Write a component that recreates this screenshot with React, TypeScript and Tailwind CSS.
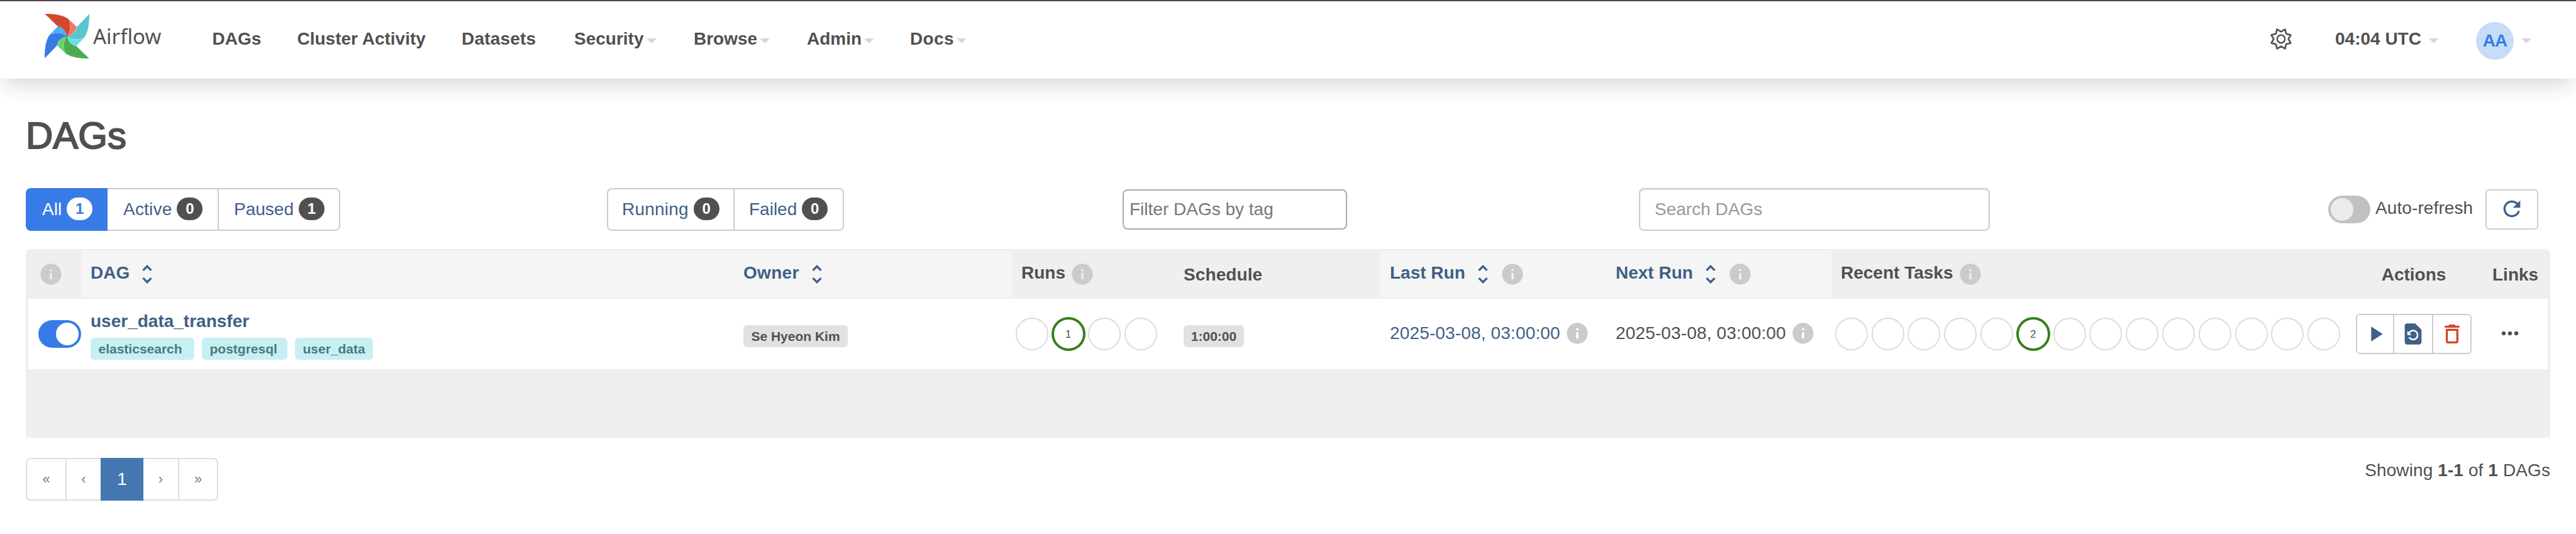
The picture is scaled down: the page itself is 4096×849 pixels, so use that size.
import React from "react";
import {
  MdDeleteOutline,
  MdInfo,
  MdMoreHoriz,
  MdPlayArrow,
  MdRefresh,
  MdRestorePage,
  MdUnfoldMore,
} from "react-icons/md";

const BLADES = [
  { rotate: 180, main: "#4eaa52", light: "#62d666" },
  { rotate: 270, main: "#377be6", light: "#50aefb" },
  { rotate: 90, main: "#5bc4d1", light: "#6adfea" },
  { rotate: 0, main: "#d2482f", light: "#f07c5f" },
];

function Pinwheel() {
  return (
    <svg viewBox="-106.5 -106.5 213 213" className="size-[71px]">
      {BLADES.map((b) => (
        <g key={b.rotate} transform={`rotate(${b.rotate})`}>
          <path
            fill={b.main}
            d="M-106-107C-60-106-18-102 8-81C19-50 16-20 0 0C-4-20-22-46-43-46Z"
          />
          <path fill={b.light} d="M8-81L43-48Q47-44 45-39C40-20 20-4 0 0C16-20 19-50 8-81Z" />
        </g>
      ))}
      <circle r="3.5" fill="#51504f" />
    </svg>
  );
}

function Gear() {
  const points = Array.from({ length: 16 }, (_, i) => {
    const angle = (i * Math.PI) / 8;
    const r = i % 2 ? 50 : 35;
    return `${(r * Math.cos(angle)).toFixed(1)},${(r * Math.sin(angle)).toFixed(1)}`;
  }).join(" ");
  return (
    <svg viewBox="-60 -60 120 120" className="size-10" fill="none" stroke="#51504f">
      <polygon points={points} strokeWidth="8" strokeLinejoin="round" />
      <circle r="18.5" strokeWidth="7.5" />
    </svg>
  );
}

function Caret({ className = "" }: { className?: string }) {
  return (
    <span
      className={`mt-[6px] block size-0 border-x-8 border-t-8 border-x-transparent border-t-[#dfd3e2] ${className}`}
    />
  );
}

function NavItem({ label, width, menu = false }: { label: string; width: string; menu?: boolean }) {
  return (
    <div className={`flex shrink-0 items-center ${width}`}>
      <span>{label}</span>
      {menu && <Caret className="ml-[4px]" />}
    </div>
  );
}

function Count({ n, active = false }: { n: number; active?: boolean }) {
  return (
    <span
      className={`mb-[2px] ml-[8px] flex h-[36px] w-[41px] items-center justify-center rounded-[20px] text-[24px] font-bold tracking-normal ${
        active ? "bg-white text-[#377be6]" : "bg-[#51504f] text-white"
      }`}
    >
      {n}
    </span>
  );
}

function Info({ className = "" }: { className?: string }) {
  return <MdInfo className={`size-10 shrink-0 text-[#cbcbcb] ${className}`} />;
}

function SortHeader({ label, className = "", info = false }: { label: string; className?: string; info?: boolean }) {
  return (
    <div className={`my-[2px] flex items-center bg-[#f5f5f5] text-[#3f5f87] ${className}`}>
      <span className="mb-[3px]">{label}</span>
      <MdUnfoldMore className="ml-[8px] size-10 shrink-0" />
      {info && <Info className="ml-[7px]" />}
    </div>
  );
}

function Circles({ total, at, value, className }: { total: number; at: number; value: number; className: string }) {
  return (
    <div className={`flex items-center ${className}`}>
      {Array.from({ length: total }, (_, i) => (
        <div key={i} className="flex w-[57.8px] shrink-0 items-center justify-center">
          {i === at ? (
            <div className="flex size-[54px] items-center justify-center rounded-full border-4 border-[#36801b] text-[16.5px]">
              {value}
            </div>
          ) : (
            <div className="size-[52px] rounded-full border-2 border-[#dddddd]" />
          )}
        </div>
      ))}
    </div>
  );
}

const COLS = "grid grid-cols-[88px_1037px_442px_258px_328px_359px_359px_816px_220px_107px]";
const ROW_COLS = "grid grid-cols-[84px_1037px_442px_258px_328px_359px_359px_816px_220px_103px]";

export default function App() {
  return (
    <div className="flex h-[849px] w-full flex-col overflow-hidden bg-white font-['Liberation_Sans',Arial,sans-serif] text-[28px] leading-none whitespace-nowrap text-[#51504f]">
      <header className="flex h-[125px] shrink-0 border-t-2 border-[#53424a] bg-white pb-[4px] pl-[71px] pr-[71px] font-bold shadow-[0_17px_28px_-6px_rgba(81,80,79,0.21)]">
        <div className="mb-[8px] flex w-[266.5px] shrink-0 items-center">
          <Pinwheel />
          <span className="ml-[6px] font-['Noto_Sans','Open_Sans',sans-serif] text-[33px] font-normal">
            Airflow
          </span>
        </div>
        <nav className="flex">
          <NavItem label="DAGs" width="w-[135px]" />
          <NavItem label="Cluster Activity" width="w-[261.5px]" />
          <NavItem label="Datasets" width="w-[179px] tracking-[0.2px]" />
          <NavItem label="Security" width="w-[190px]" menu />
          <NavItem label="Browse" width="w-[180px]" menu />
          <NavItem label="Admin" width="w-[164px]" menu />
          <NavItem label="Docs" width="w-[100px] tracking-[0.4px]" menu />
        </nav>
        <div className="ml-auto flex items-center">
          <Gear />
          <span className="ml-[66px] w-[137px]">04:04 UTC</span>
          <Caret className="ml-[12px]" />
          <div className="mt-[6px] ml-[59px] flex size-[60px] items-center justify-center rounded-full bg-[#c6dcf7] text-[#377be6]">
            <span className="tracking-[-1px]">AA</span>
          </div>
          <Caret className="ml-[12px]" />
        </div>
      </header>

      <main className="flex flex-col px-[41px]">
        <h1 className="mt-[61px] h-[60px] text-[60px] leading-[60px] font-normal [-webkit-text-stroke:2px_#51504f]">
          DAGs
        </h1>

        <div className="mt-[53px] grid h-[68px] grid-cols-[924px_820px_821px_1096px_1fr] items-center">
          <div className="flex h-full text-[#3f5f87]">
            <div className="flex w-[130px] items-center rounded-l-[8px] bg-[#377be6] pl-[26px] text-white">
              All
              <Count n={1} active />
            </div>
            <div className="flex w-[177px] items-center border-2 border-l-0 border-[#cccccc] pl-[25px] tracking-[0.2px]">
              Active
              <Count n={0} />
            </div>
            <div className="ml-[-2px] flex w-[195px] items-center rounded-r-[8px] border-2 border-[#cccccc] pl-[24px]">
              Paused
              <Count n={1} />
            </div>
          </div>
          <div className="flex h-full text-[#3f5f87]">
            <div className="flex w-[203px] items-center rounded-l-[8px] border-2 border-[#cccccc] pl-[22px] tracking-[0.2px]">
              Running
              <Count n={0} />
            </div>
            <div className="ml-[-2px] flex w-[176px] items-center rounded-r-[8px] border-2 border-[#cccccc] pl-[23px]">
              Failed
              <Count n={0} />
            </div>
          </div>
          <div className="flex h-[64px] w-[357px] items-center rounded-[8px] border-2 border-[#aaaaaa] pl-[9px] text-[#777777]">
            Filter DAGs by tag
          </div>
          <div className="flex h-full w-[558px] items-center rounded-[8px] border-2 border-[#cccccc] pl-[23px] text-[#999999] shadow-[inset_0_2px_2px_rgba(0,0,0,0.075)]">
            Search DAGs
          </div>
          <div className="flex items-center">
            <div className="flex h-[44px] w-[67px] items-center rounded-full bg-[#c2c1c0] pl-[4px]">
              <div className="size-[36px] rounded-full bg-[#ebebeb]" />
            </div>
            <span className="mb-[4px] ml-[8px] w-[175px] tracking-[0.1px]">Auto-refresh</span>
            <div className="flex h-[64px] w-[84px] items-center justify-center rounded-[6px] border-2 border-[#cccccc] text-[#3f5f87]">
              <MdRefresh className="mb-[2px] size-10" />
            </div>
          </div>
        </div>

        <div className="mt-[29px] h-[300px] w-[4014px] overflow-hidden rounded-t-[8px] bg-[#efefef]">
          <div className={`${COLS} h-[79px] font-bold`}>
            <div className="flex items-center pl-[20px]">
              <Info />
            </div>
            <SortHeader label="DAG" className="pl-[15px]" />
            <SortHeader label="Owner" className="pl-[16px] tracking-[0.3px]" />
            <div className="flex items-center pl-[16px]">
              <span className="mb-[3px]">Runs</span>
              <Info className="ml-[7px]" />
            </div>
            <div className="flex items-center pt-[3px] pl-[16px] tracking-[0.1px]">Schedule</div>
            <SortHeader label="Last Run" className="pl-[16px]" info />
            <SortHeader label="Next Run" className="pl-[16px]" info />
            <div className="flex items-center pl-[15px]">
              <span className="mb-[3px]">Recent Tasks</span>
              <Info className="ml-[8px]" />
            </div>
            <div className="flex items-center justify-center pt-[3px]">Actions</div>
            <div className="flex items-center pt-[3px] pl-[15px]">Links</div>
          </div>

          <div className={`${ROW_COLS} h-[112px] border-x-4 border-[#efefef] bg-white`}>
            <div className="flex items-center pl-[16px]">
              <div className="flex h-[44px] w-[68px] items-center justify-end rounded-full bg-[#377be6] pr-[4px]">
                <div className="size-[36px] rounded-full bg-white" />
              </div>
            </div>
            <div className="flex flex-col justify-center pl-[15px]">
              <div className="h-[40px] leading-[40px] font-bold text-[#3f5f87]">user_data_transfer</div>
              <div className="mt-[6px] flex gap-[12px] text-[21px] font-bold text-[#467a7d]">
                <span className="flex h-[35px] w-[165px] items-center rounded-[6px] bg-[#c8f0f3] pl-[12.5px]">
                  elasticsearch
                </span>
                <span className="flex h-[35px] w-[136px] items-center rounded-[6px] bg-[#c8f0f3] pl-[12.5px]">
                  postgresql
                </span>
                <span className="flex h-[35px] w-[124px] items-center rounded-[6px] bg-[#c8f0f3] pl-[12.5px]">
                  user_data
                </span>
              </div>
            </div>
            <div className="flex items-center pt-[7px] pl-[16px]">
              <span className="flex h-[35px] w-[166px] items-center justify-center rounded-[6px] bg-[#e1e1e1] text-[21px] font-bold">
                Se Hyeon Kim
              </span>
            </div>
            <Circles total={4} at={1} value={1} className="pl-[4px]" />
            <div className="flex items-center pt-[7px] pl-[16px]">
              <span className="flex h-[35px] w-[96px] items-center justify-center rounded-[6px] bg-[#e1e1e1] text-[21px] font-bold">
                1:00:00
              </span>
            </div>
            <div className="flex items-center pb-[3px] pl-[16px] tracking-[0.15px] text-[#3f5f87]">
              2025-03-08, 03:00:00
              <Info className="ml-[7px]" />
            </div>
            <div className="flex items-center pb-[3px] pl-[16px] tracking-[0.15px]">
              2025-03-08, 03:00:00
              <Info className="ml-[7px]" />
            </div>
            <Circles total={14} at={5} value={2} className="pl-[3px]" />
            <div className="flex items-center pb-[1px] pl-[18px] text-[#3f5f87]">
              <div className="flex h-[64px] w-[61px] shrink-0 items-center justify-center rounded-l-[6px] border-2 border-[#cccccc]">
                <MdPlayArrow className="size-10 shrink-0" />
              </div>
              <div className="ml-[-2px] flex h-[64px] w-[64px] shrink-0 items-center justify-center border-2 border-[#cccccc]">
                <MdRestorePage className="size-10 shrink-0" />
              </div>
              <div className="ml-[-2px] flex h-[64px] w-[63px] shrink-0 items-center justify-center rounded-r-[6px] border-2 border-[#cccccc]">
                <MdDeleteOutline className="size-10 shrink-0 text-[#d2452b]" />
              </div>
            </div>
            <div className="flex items-center pb-[2px] pl-[23px]">
              <MdMoreHoriz className="size-10 shrink-0" />
            </div>
          </div>
        </div>

        <div className="mt-[32px] flex w-[4014px] items-start justify-between">
          <div className="flex h-[68px] text-[22px] text-[#777777] [&>div]:flex [&>div]:items-center [&>div]:justify-center [&>div]:border-2 [&>div]:border-[#dddddd]">
            <div className="w-[65px] rounded-l-[8px]">«</div>
            <div className="ml-[-2px] w-[58px]">‹</div>
            <div className="z-10 ml-[-2px] w-[68px] border-[#4578b2]! bg-[#4578b2] text-[28px] text-white">1</div>
            <div className="ml-[-2px] w-[59px]">›</div>
            <div className="ml-[-2px] w-[64px] rounded-r-[8px]">»</div>
          </div>
          <div className="leading-[40px] tracking-[0.1px]">
            Showing <b>1-1</b> of <b>1</b> DAGs
          </div>
        </div>
      </main>
    </div>
  );
}
